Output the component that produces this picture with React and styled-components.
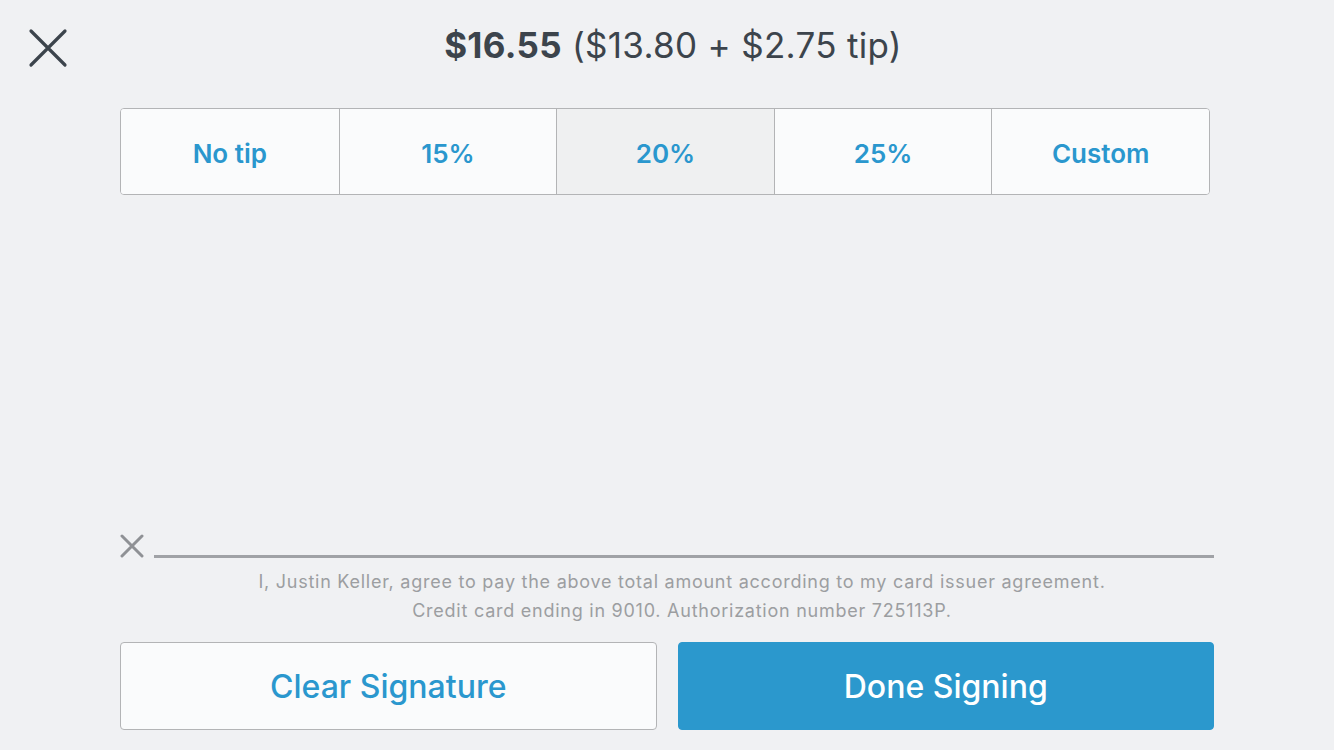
import styled, { createGlobalStyle } from 'styled-components';
import { useState } from 'react';

const GlobalStyle = createGlobalStyle`
  html, body {
    margin: 0;
    padding: 0;
    background: #f0f1f3;
  }
  body {
    font-family: Inter, "Open Sans", Roboto, sans-serif;
  }
`

const Tela = styled.div`
  width: 1334px;
  height: 750px;
  display: flex;
  flex-direction: column;
  box-sizing: border-box;
  padding: 0 120px 20px;
  background: #f0f1f3;
`

const Cabecalho = styled.header`
  height: 108px;
  display: grid;
  grid-template-columns: 1fr auto 1fr;
  align-items: start;
  margin: 0 -120px;
  padding: 0 28px;
`

const Fechar = styled.button`
  width: 40px;
  height: 40px;
  margin-top: 28px;
  padding: 0;
  border: none;
  background: transparent;
  cursor: pointer;
  justify-self: start;
`

const Titulo = styled.h1`
  margin: 24px 0 0 12px;
  font-size: 35px;
  font-weight: 400;
  color: #3c444c;
  letter-spacing: 0.3px;
  b {
    font-weight: 700;
  }
`

const Gorjetas = styled.div`
  display: grid;
  grid-template-columns: repeat(5, 1fr);
  width: 1090px;
  height: 87px;
  box-sizing: border-box;
  border: 1px solid #b3b4b6;
  border-radius: 4px;
  overflow: hidden;
  background: #fafbfc;
`

const Opcao = styled.button`
  border: none;
  border-left: ${p => (p.primeiro ? 'none' : '1px solid #b3b4b6')};
  background: ${p => (p.ativo ? '#eff0f1' : '#fafbfc')};
  color: #2a97ce;
  font-family: inherit;
  font-size: 26px;
  font-weight: 600;
  cursor: pointer;
  padding: 4px 0 0;
`

const AreaAssinatura = styled.div`
  flex: 1;
`

const LinhaAssinatura = styled.div`
  display: flex;
  align-items: flex-end;
  gap: 10px;
`

const Traco = styled.div`
  flex: 1;
  height: 3px;
  background: #a0a2a6;
`

const Aviso = styled.p`
  margin: 9px 0 17px;
  padding-left: 30px;
  text-align: center;
  font-size: 18px;
  line-height: 29px;
  color: #9c9ea1;
  letter-spacing: 0.75px;
`

const Botoes = styled.div`
  display: grid;
  grid-template-columns: 1fr 1fr;
  gap: 21px;
`

const Botao = styled.button`
  height: 88px;
  box-sizing: border-box;
  border-radius: 4px;
  border: 1px solid ${p => (p.primario ? '#2b98cd' : '#b3b4b6')};
  background: ${p => (p.primario ? '#2b98cd' : '#fafbfc')};
  color: ${p => (p.primario ? '#ffffff' : '#2a97ce')};
  font-family: inherit;
  font-size: 32px;
  font-weight: 500;
  cursor: pointer;
`

const opcoes = ['No tip', '15%', '20%', '25%', 'Custom']

function App() {
  const [ativo, setAtivo] = useState('20%')

  return (
    <>
      <GlobalStyle />
      <Tela>
        <Cabecalho>
          <Fechar aria-label="Close">
            <svg width="40" height="40" viewBox="0 0 40 40">
              <path d="M3 3 L37 37 M37 3 L3 37" stroke="#3c444c" strokeWidth="3.2" strokeLinecap="round" />
            </svg>
          </Fechar>
          <Titulo><b>$16.55</b> ($13.80 + $2.75 tip)</Titulo>
          <span />
        </Cabecalho>

        <Gorjetas>
          {opcoes.map((opcao, i) => (
            <Opcao key={opcao} primeiro={i === 0} ativo={opcao === ativo} onClick={() => setAtivo(opcao)}>
              {opcao}
            </Opcao>
          ))}
        </Gorjetas>

        <AreaAssinatura />

        <LinhaAssinatura>
          <svg width="24" height="24" viewBox="0 0 24 24">
            <path d="M2 2 L22 22 M22 2 L2 22" stroke="#8f9195" strokeWidth="3" strokeLinecap="round" />
          </svg>
          <Traco />
        </LinhaAssinatura>

        <Aviso>
          I, Justin Keller, agree to pay the above total amount according to my card issuer agreement.<br />
          Credit card ending in 9010. Authorization number 725113P.
        </Aviso>

        <Botoes>
          <Botao>Clear Signature</Botao>
          <Botao primario>Done Signing</Botao>
        </Botoes>
      </Tela>
    </>
  )
}

export default App;
